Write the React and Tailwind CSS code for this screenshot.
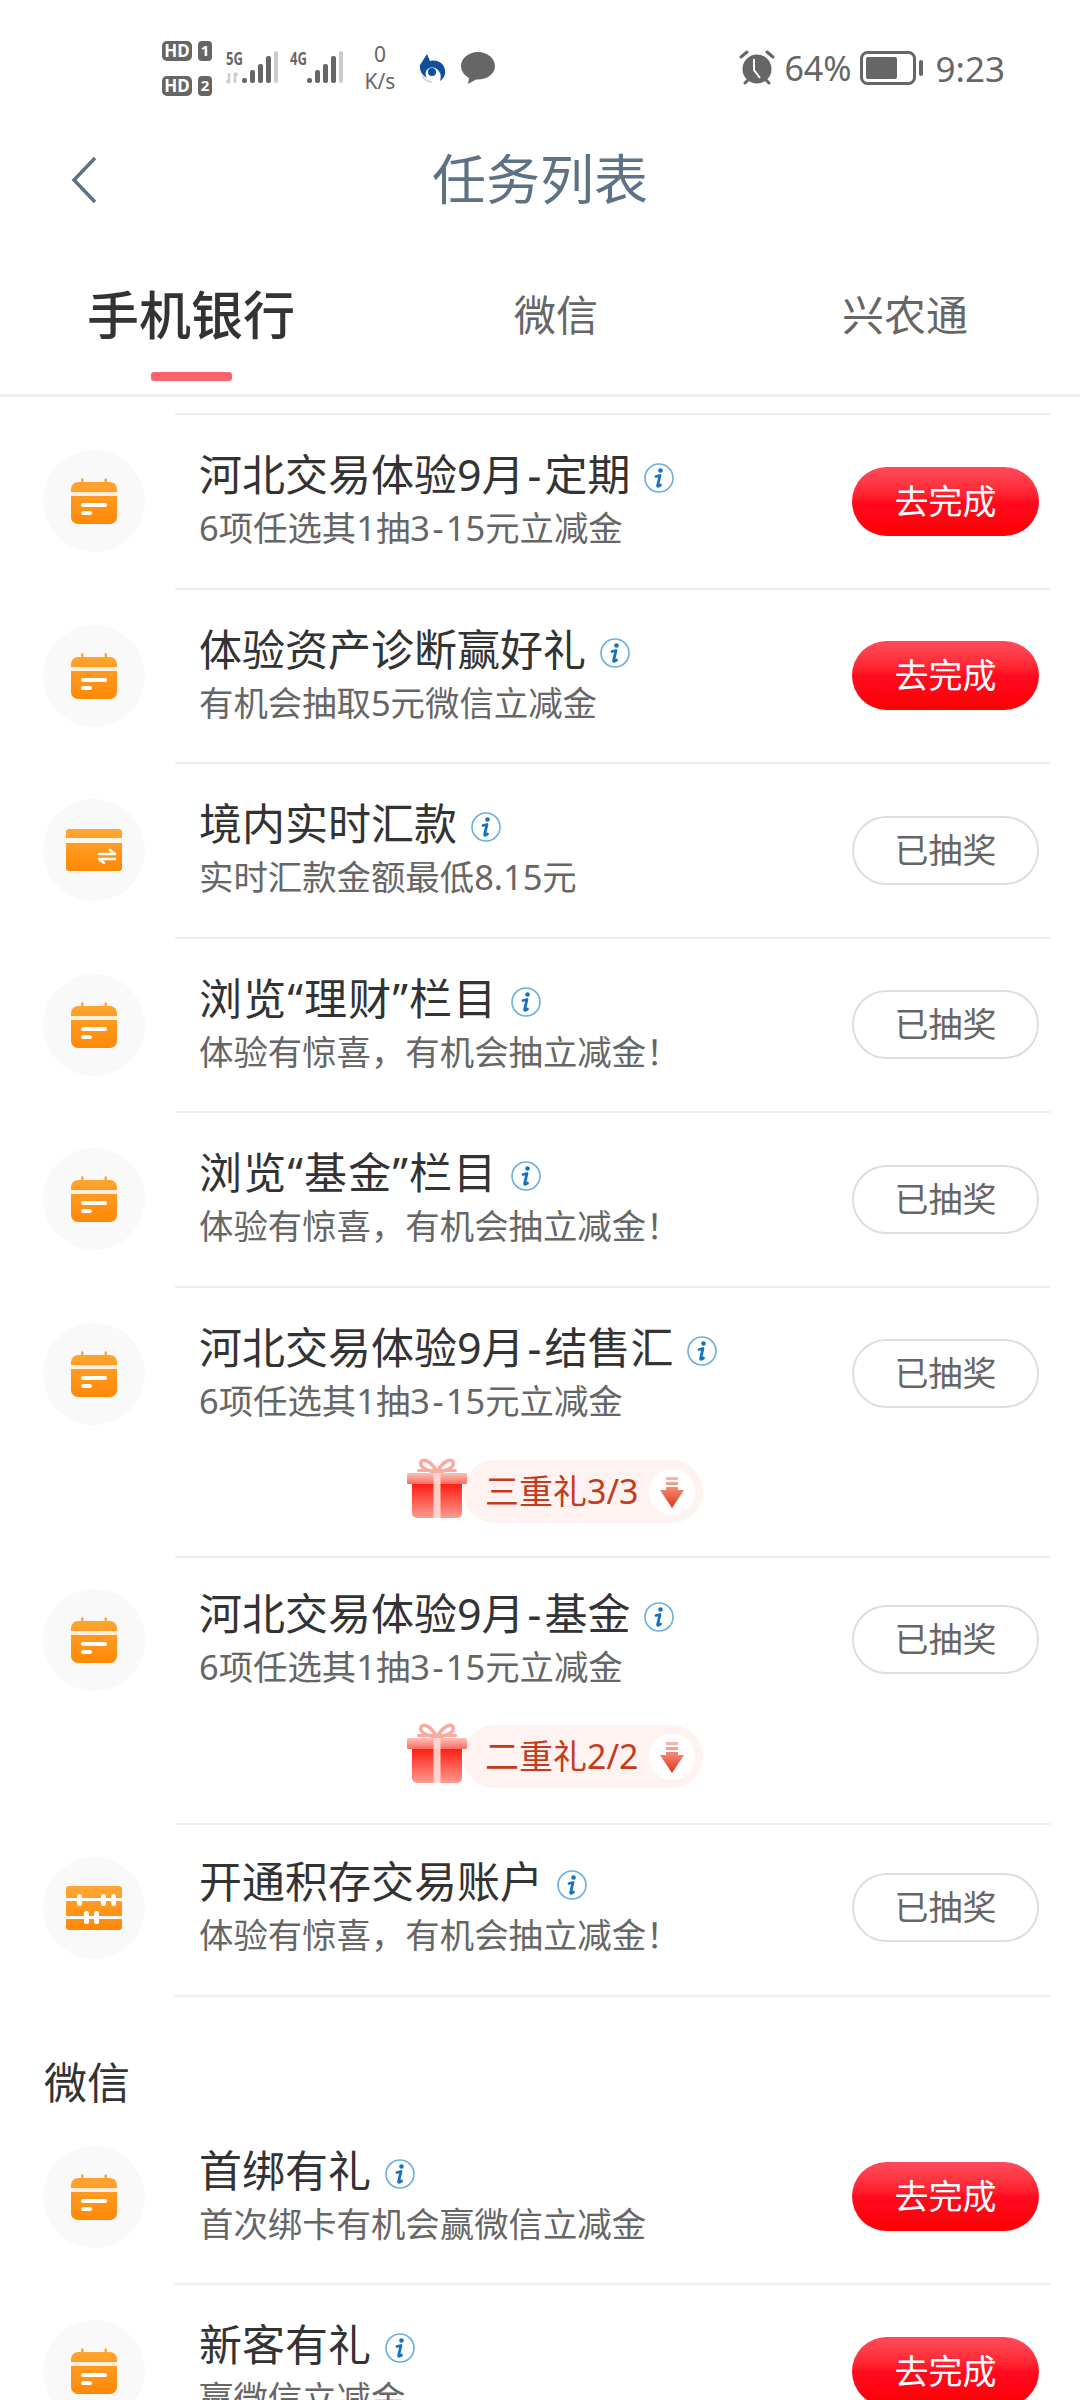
import React from 'react';

const tasks = [
  { title: '河北交易体验9月-定期', sub: '6项任选其1抽3-15元立减金', todo: true },
  { title: '体验资产诊断赢好礼', sub: '有机会抽取5元微信立减金', todo: true },
  { title: '境内实时汇款', sub: '实时汇款金额最低8.15元', icon: 'card' },
  { title: '浏览“理财”栏目', sub: '体验有惊喜，有机会抽立减金！', titleClass: 'tracking-[1.2px]' },
  { title: '浏览“基金”栏目', sub: '体验有惊喜，有机会抽立减金！', titleClass: 'tracking-[1.2px]' },
  { title: '河北交易体验9月-结售汇', sub: '6项任选其1抽3-15元立减金', gift: '三重礼3/3', giftClass: 'h-[95.500px]' },
  { title: '河北交易体验9月-基金', sub: '6项任选其1抽3-15元立减金', gift: '二重礼2/2', rowClass: 'h-[164px]', giftClass: 'h-[101px] pt-[3px]' },
  { title: '开通积存交易账户', sub: '体验有惊喜，有机会抽立减金！', icon: 'abacus', rowClass: 'h-[166px] mb-[4px]' },
];

const wechatTasks = [
  { title: '首绑有礼', sub: '首次绑卡有机会赢微信立减金', todo: true },
  { title: '新客有礼', sub: '赢微信立减金', todo: true },
];

// the hyphen is wider in the original font
const withHyphen = (text) => {
  const parts = text.split('-');
  if (parts.length === 1) return text;
  return (
    <>
      {parts[0]}
      <span className="mx-[0.07em]">-</span>
      {parts[1]}
    </>
  );
};

const Gradient = ({ id }) => (
  <defs>
    <linearGradient id={id} x1="0" y1="0" x2="0" y2="1">
      <stop offset="0" stopColor="#ffa734" />
      <stop offset="1" stopColor="#ff8806" />
    </linearGradient>
  </defs>
);

const CalendarIcon = () => (
  <svg width="46" height="46" viewBox="0 0 46 46">
    <Gradient id="cal" />
    <path d="M10 1.500a1.200 1.200 0 0 1 2.500 0V4h21V1.500a1.200 1.200 0 0 1 2.500 0V4h3a7 7 0 0 1 7 7v28a7 7 0 0 1-7 7H7a7 7 0 0 1-7-7V11a7 7 0 0 1 7-7h3z" fill="url(#cal)" />
    <rect x="0" y="14" width="46" height="4" fill="#fff" opacity="0.85" />
    <rect x="10" y="25" width="26" height="4" rx="2" fill="#fff" />
    <rect x="10" y="33" width="11" height="4" rx="2" fill="#fff" />
  </svg>
);

const CardIcon = () => (
  <svg width="56" height="42" viewBox="0 0 56 42">
    <Gradient id="card" />
    <rect width="56" height="42" rx="3" fill="url(#card)" />
    <rect y="9" width="56" height="5" fill="#fff" opacity="0.9" />
    <path d="M33 25h16l-5-4M49 30H33l5 4" fill="none" stroke="#fff" strokeWidth="2.500" strokeLinecap="round" strokeLinejoin="round" />
  </svg>
);

const AbacusIcon = () => (
  <svg width="56" height="44" viewBox="0 0 56 44">
    <Gradient id="abacus" />
    <rect width="56" height="44" rx="3" fill="url(#abacus)" />
    <rect y="12" width="56" height="3" fill="#fff" />
    <rect y="30" width="56" height="3" fill="#fff" />
    <rect x="11" y="8" width="5" height="12" rx="2.500" fill="#fff" />
    <rect x="35" y="8" width="5" height="12" rx="2.500" fill="#fff" />
    <rect x="45" y="8" width="5" height="12" rx="2.500" fill="#fff" />
    <rect x="18" y="25" width="5" height="13" rx="2.500" fill="#fff" />
    <rect x="28" y="25" width="5" height="13" rx="2.500" fill="#fff" />
  </svg>
);

const InfoIcon = () => (
  <svg width="30" height="30" viewBox="0 0 30 30" className="block shrink-0">
    <circle cx="15" cy="15" r="14" fill="none" stroke="#6aafe0" strokeWidth="1.600" />
    <circle cx="16.500" cy="7.500" r="2.300" fill="#1572c4" />
    <path d="M12 13.500l4-1-2.400 10c-.2 1 .6 1.200 2.900-.5" fill="none" stroke="#1572c4" strokeWidth="2.800" strokeLinecap="round" strokeLinejoin="round" />
  </svg>
);

const GiftIcon = () => (
  <svg width="60" height="60" viewBox="0 0 60 60">
    <defs>
      <linearGradient id="giftBody" x1="0" y1="0" x2="0" y2="1">
        <stop offset="0" stopColor="#fd1f12" />
        <stop offset="1" stopColor="#ff9a90" />
      </linearGradient>
      <linearGradient id="giftLid" x1="0" y1="0" x2="0" y2="1">
        <stop offset="0" stopColor="#ffc0b8" />
        <stop offset="1" stopColor="#fb6b5e" />
      </linearGradient>
    </defs>
    <path d="M30 14C24 3 16 0 14 4c-2 5 6 9 16 10zM30 14C36 3 44 0 46 4c2 5-6 9-16 10z" fill="none" stroke="#fbaaa2" strokeWidth="3.500" />
    <rect x="10" y="11" width="40" height="3" rx="1.500" fill="#fbaaa2" />
    <path d="M5 26h50v29a5 5 0 0 1-5 5H10a5 5 0 0 1-5-5z" fill="url(#giftBody)" />
    <rect x="0" y="15" width="60" height="11" rx="1.500" fill="url(#giftLid)" />
    <rect x="26.500" y="15" width="7" height="45" fill="#ffdcd7" opacity="0.9" />
  </svg>
);

const ArrowIcon = () => (
  <svg width="24" height="32" viewBox="0 0 24 32">
    <defs>
      <linearGradient id="arrow" x1="0" y1="0" x2="0" y2="1">
        <stop offset="0" stopColor="#fbb9ae" />
        <stop offset="1" stopColor="#e2310f" />
      </linearGradient>
    </defs>
    <path d="M6 1h12v3H6zM6 6h12v3H6zM6 11h12v3h6L12 32 0 14h6z" fill="url(#arrow)" />
  </svg>
);

const Bars = ({ start }) => (
  <>
    <rect x={start} y="32" width="5" height="5" rx="2" fill="#666" />
    <rect x={start + 8} y="24" width="5" height="13" rx="2" fill="#666" />
    <rect x={start + 16} y="18" width="5" height="19" rx="2" fill="#666" />
    <rect x={start + 24} y="10" width="5" height="27" rx="2" fill="#666" />
    <rect x={start + 32} y="5" width="4" height="32" rx="2" fill="#ccc" />
  </>
);

const TaskRow = ({ task }) => {
  const { title, sub, todo, icon, gift, rowClass, giftClass, titleClass } = task;

  return (
    <div>
      <div className={`flex items-center pl-[43px] pr-[41px] ${rowClass || 'h-[172.500px]'}`}>
        <div className="flex h-[102px] w-[102px] shrink-0 items-center justify-center rounded-full bg-[#f9f9f9]">
          {icon === 'card' ? <CardIcon /> : icon === 'abacus' ? <AbacusIcon /> : <CalendarIcon />}
        </div>
        <div className="ml-[54px] min-w-0 flex-1 pb-[3px]">
          <div className="flex h-[54px] items-center">
            <span className={`whitespace-nowrap text-[43px] leading-[54px] text-[#333] ${titleClass || ''}`}>{withHyphen(title)}</span>
            <span className="ml-[14px] mt-[6px]"><InfoIcon /></span>
          </div>
          <div className="mt-[3px] whitespace-nowrap text-[34.400px] leading-[46px] text-[#666]">{withHyphen(sub)}</div>
        </div>
        {todo ? (
          <div className="flex h-[69px] w-[187px] shrink-0 items-center justify-center rounded-full bg-gradient-to-b from-[#fe4a5a] via-[#ff0a1e] to-[#fe0000] text-[34px] text-white">
            去完成
          </div>
        ) : (
          <div className="flex h-[69px] w-[187px] shrink-0 items-center justify-center rounded-full border-2 border-[#dedede] bg-white text-[34px] text-[#666]">
            已抽奖
          </div>
        )}
      </div>
      {gift && (
        <div className={`flex justify-center ${giftClass}`}>
          <div className="relative ml-[86px] flex h-[63px] w-[240px] items-center rounded-full bg-[#fff3f1] pl-[22px]">
            <div className="absolute left-[-56px] top-[-2px]"><GiftIcon /></div>
            <span className="whitespace-nowrap text-[34px] text-[#c5391c]">{gift}</span>
            <div className="absolute right-[8px] top-[9px] flex h-[46px] w-[46px] items-center justify-center rounded-full bg-white">
              <ArrowIcon />
            </div>
          </div>
        </div>
      )}
      <div className="ml-[175px] mr-[30px] h-[2px] bg-[#eeeeee]" />
    </div>
  );
};

const StatusBar = () => (
  <div className="flex h-[110px] items-center pl-[162px] pr-[75px] pt-[26px] text-[#666]">
    <div className="flex flex-col gap-[15px]">
      {['1', '2'].map(n => (
        <div key={n} className="flex gap-[6px]">
          <span className="flex h-[20px] w-[30px] items-center justify-center rounded-[5px] bg-[#666] text-[17px] font-bold leading-none text-white">HD</span>
          <span className="flex h-[20px] w-[14px] items-center justify-center rounded-[4px] bg-[#666] text-[15px] font-bold leading-none text-white">{n}</span>
        </div>
      ))}
    </div>
    <svg className="ml-[14px]" width="54" height="44" viewBox="0 0 54 44">
      <text x="0" y="19" fontSize="18" fontWeight="700" fill="#666" textLength="17" lengthAdjust="spacingAndGlyphs">5G</text>
      <path d="M3 27v10M0.500 34.500L3 37M9 27v10M9 27l2.500 2.500" stroke="#ccc" strokeWidth="2.500" fill="none" />
      <Bars start={16} />
    </svg>
    <svg className="ml-[10px]" width="54" height="44" viewBox="0 0 54 44">
      <text x="0" y="19" fontSize="18" fontWeight="700" fill="#666" textLength="17" lengthAdjust="spacingAndGlyphs">4G</text>
      <Bars start={17} />
    </svg>
    <div className="ml-[17px] flex w-[38px] flex-col items-center text-[21px] leading-[27px]">
      <span>0</span>
      <span>K/s</span>
    </div>
    <svg className="ml-[19px]" width="28" height="30" viewBox="0 0 28 30">
      <path d="M9 1l3 7c7-2 14 2 15 9 1 5-2 9-5 11 1-3 1-6 0-8-2-5-8-7-12-4-3 2-3 6-1 9-5-3-8-8-7-13z" fill="#0f4f9e" />
      <circle cx="14" cy="19" r="4" fill="#0f4f9e" />
      <path d="M4 23c3 4 6 6 10 6" stroke="#bcd3ea" strokeWidth="1.500" fill="none" />
    </svg>
    <svg className="ml-[14px]" width="36" height="34" viewBox="0 0 36 34">
      <path d="M18 1C8.500 1 1 7.500 1 15c0 5 3.500 9.500 8 12l-1 6 8-4.500h2c9.500 0 17-6 17-13.500S27.500 1 18 1z" fill="#666" />
    </svg>
    <svg className="ml-auto" width="36" height="36" viewBox="0 0 36 36">
      <circle cx="18" cy="19" r="14.500" fill="#666" />
      <path d="M2 7l6-5M34 7l-6-5M6 33l3-3M30 33l-3-3" stroke="#666" strokeWidth="3" strokeLinecap="round" />
      <path d="M15 9v11l6 8" stroke="#fff" strokeWidth="2" fill="none" />
    </svg>
    <span className="ml-[9px] text-[34px] leading-none">64%</span>
    <svg className="ml-[8px]" width="64" height="34" viewBox="0 0 64 34">
      <rect x="1.500" y="1.500" width="53" height="31" rx="6" fill="none" stroke="#666" strokeWidth="3" />
      <rect x="6" y="6" width="31" height="22" rx="2" fill="#666" />
      <rect x="59" y="9" width="4" height="16" rx="2" fill="#666" />
    </svg>
    <span className="ml-[12px] text-[35px] leading-none">9:23</span>
  </div>
);

const App = () => {
  return (
    <div className="h-[2400px] w-[1080px] overflow-hidden bg-white [font-family:'Noto_Sans','Noto_Sans_CJK_SC',sans-serif]">
      <StatusBar />

      <div className="relative flex h-[136px] items-center justify-center pt-[2px]">
        <svg className="absolute left-[70px] top-[46px]" width="28" height="48" viewBox="0 0 28 48">
          <path d="M25 2L4 24l21 22" fill="none" stroke="#5d7285" strokeWidth="3.500" />
        </svg>
        <h1 className="text-[54px] font-normal text-[#5d7285]">任务列表</h1>
      </div>

      <div className="flex h-[148px] pl-[87px]">
        <div className="flex w-[208px] flex-col items-center">
          <span className="mt-[34px] text-[52px] font-medium leading-[70px] text-[#333]">手机银行</span>
          <span className="mt-[22px] h-[9px] w-[81px] rounded-[3px] bg-[#f9636b]" />
        </div>
        <span className="ml-[219px] mt-[34px] text-[42px] leading-[70px] text-[#666]">微信</span>
        <span className="ml-[244px] mt-[34px] text-[42px] leading-[70px] text-[#666]">兴农通</span>
      </div>
      <div className="h-[3px] bg-[#eeeeee]" />

      <div className="ml-[175px] mr-[30px] mt-[16px] h-[2px] bg-[#eeeeee]" />
      {tasks.map(task => (
        <TaskRow key={task.title} task={task} />
      ))}

      <div className="h-[114px] pl-[44px] pt-[51px] text-[43px] leading-[70px] text-[#333]">微信</div>
      {wechatTasks.map(task => (
        <TaskRow key={task.title} task={task} />
      ))}
    </div>
  );
};

export default App;
